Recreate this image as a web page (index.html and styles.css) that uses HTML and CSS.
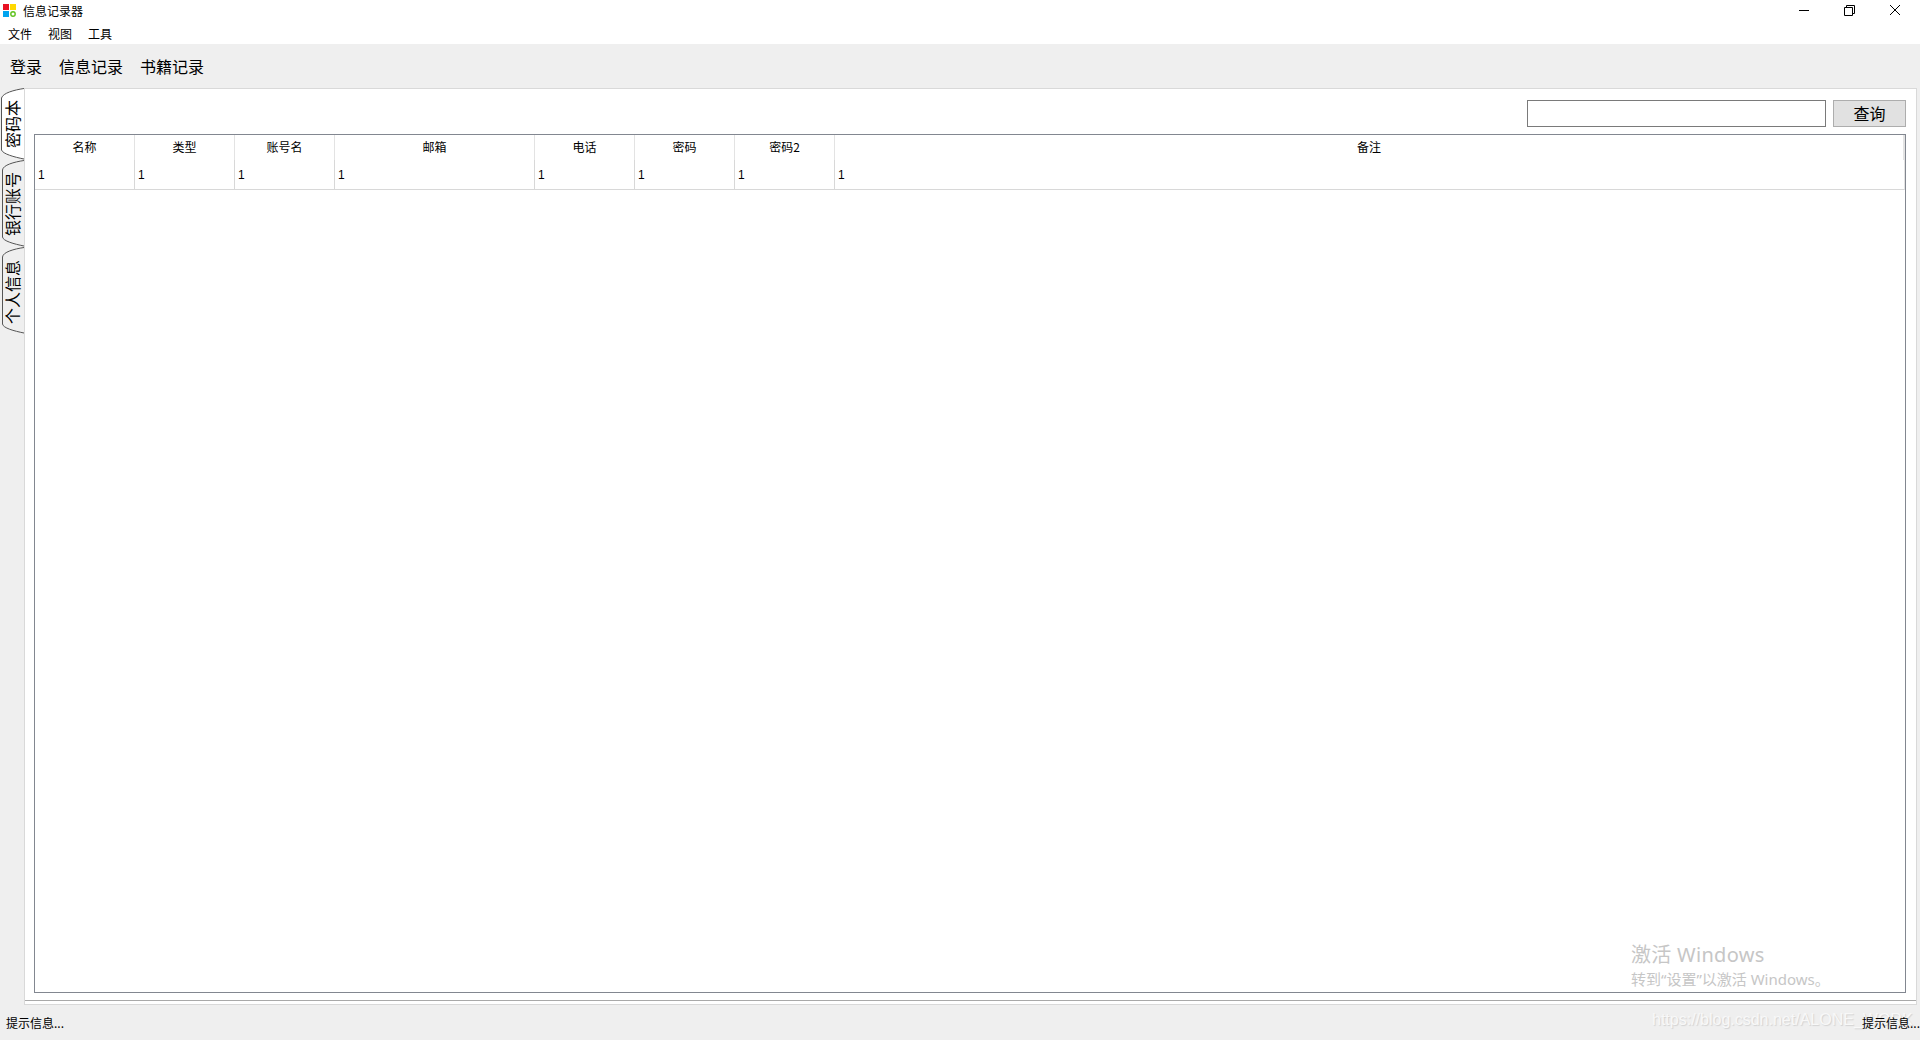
FILE: index.html
```html
<!DOCTYPE html>
<html lang="zh-CN">
<head>
<meta charset="utf-8">
<title>信息记录器</title>
<link rel="stylesheet" href="styles.css">
</head>
<body>
<div class="app">
  <header class="titlebar">
    <div class="title-row">
      <div class="brand">
        <svg class="app-icon" width="14" height="14" viewBox="0 0 14 14">
          <rect x="0" y="0" width="6" height="6" fill="#e81123"/>
          <rect x="7" y="0" width="6" height="6" fill="#ffd800"/>
          <rect x="0" y="7" width="6" height="6" fill="#00a4ef"/>
          <circle cx="10" cy="10" r="2.2" fill="none" stroke="#5fc21e" stroke-width="1.4"/>
        </svg>
        <span>信息记录器</span>
      </div>
      <div class="win-controls">
        <svg class="win-btn" width="46" height="20" viewBox="0 0 46 20"><path d="M19 10.5H29" stroke="#000" fill="none"/></svg>
        <svg class="win-btn" width="46" height="20" viewBox="0 0 46 20"><path d="M18.5 7.5H26.5V15.5H18.5ZM20.5 7.5V5.5H28.5V13.5H26.5" stroke="#000" fill="none"/></svg>
        <svg class="win-btn" width="46" height="20" viewBox="0 0 46 20"><path d="M18 5L28 15M28 5L18 15" stroke="#000" fill="none"/></svg>
      </div>
    </div>
    <nav class="menu">
      <span>文件</span><span>视图</span><span>工具</span>
    </nav>
  </header>

  <div class="toolbar">
    <span>登录</span><span>信息记录</span><span>书籍记录</span>
  </div>

  <main class="workspace">
    <div class="tabs">
      <div class="tab tab-1">
        <svg class="tab-shape" width="24" height="72" viewBox="0 0 24 72"><path d="M24 .5C14 2 3 5 1.5 10V62C3 66 14 69 24 71" fill="#fff" stroke="#555"/></svg>
        <span class="tab-label">密码本</span>
      </div>
      <div class="tab tab-2">
        <svg class="tab-shape" width="24" height="87" viewBox="0 0 24 87"><path d="M24 .5C14 2 3 5 2.5 10V77C3 81 14 84 24 86" fill="none" stroke="#555"/></svg>
        <span class="tab-label">银行账号</span>
      </div>
      <div class="tab tab-3">
        <svg class="tab-shape" width="24" height="87" viewBox="0 0 24 87"><path d="M24 .5C14 2 3 5 2.5 10V77C3 81 14 84 24 86" fill="none" stroke="#555"/></svg>
        <span class="tab-label">个人信息</span>
      </div>
    </div>

    <section class="panel">
      <div class="query">
        <input class="query-input" type="text" aria-label="查询">
        <button class="query-btn" type="button">查询</button>
      </div>
      <div class="grid-frame">
        <div class="grid">
          <div class="th">名称</div><div class="th">类型</div><div class="th">账号名</div><div class="th">邮箱</div><div class="th">电话</div><div class="th">密码</div><div class="th">密码2</div><div class="th">备注</div>
          <div class="td">1</div><div class="td">1</div><div class="td">1</div><div class="td">1</div><div class="td">1</div><div class="td">1</div><div class="td">1</div><div class="td">1</div>
        </div>
      </div>
    </section>
  </main>

  <footer class="statusbar">
    <span>提示信息...</span><span>提示信息...</span>
  </footer>

  <div class="activate">
    <div class="activate-main">激活 Windows</div>
    <div class="activate-sub">转到“设置”以激活 Windows。</div>
  </div>
  <div class="csdn-mark">https://blog.csdn.net/ALONE_WORK</div>
</div>
</body>
</html>
```

FILE: styles.css
```css
* { box-sizing: border-box; }

html, body {
  margin: 0;
  height: 100%;
}

body {
  background: #efefef;
  color: #000;
  font-family: "Noto Sans CJK SC", "Liberation Sans", sans-serif;
  font-size: 12px;
  overflow: hidden;
}

.app {
  position: relative;
  display: flex;
  flex-direction: column;
  width: 1920px;
  height: 1040px;
}

.titlebar {
  height: 44px;
  background: #fff;
  flex: none;
}

.title-row {
  display: flex;
  justify-content: space-between;
  height: 22px;
}

.brand {
  display: flex;
  align-items: center;
  gap: 6px;
  padding-left: 3px;
  line-height: 22px;
}

.app-icon { flex: none; }

.win-controls {
  display: flex;
  padding-right: 2px;
}

.win-btn { display: block; }

.menu {
  display: flex;
  gap: 16px;
  padding: 1px 0 0 8px;
  height: 22px;
  line-height: 22px;
}

.toolbar {
  display: flex;
  flex: none;
  align-items: center;
  gap: 17px;
  height: 44px;
  padding-left: 10px;
  font-size: 16px;
}

.workspace {
  display: flex;
  flex: none;
  height: 917px;
}

.tabs {
  display: flex;
  flex: none;
  flex-direction: column;
  width: 24px;
  position: relative;
  z-index: 1;
}

.tab {
  position: relative;
  display: flex;
  flex: none;
  align-items: center;
  justify-content: center;
  width: 24px;
}

.tab-1 { height: 72px; }
.tab-2 { height: 87px; padding-top: 1px; }
.tab-3 { height: 87px; padding-top: 3px; }

.tab-shape {
  position: absolute;
  top: 0;
  left: 0;
}

.tab-label {
  position: relative;
  writing-mode: vertical-rl;
  text-orientation: sideways;
  transform: rotate(180deg);
  font-size: 16px;
  line-height: 20px;
  margin-left: -1px;
}

.panel {
  display: flex;
  flex-direction: column;
  width: 1893px;
  height: 917px;
  background: #fff;
  border: 1px solid #d9d9d9;
  box-shadow: inset 0 -3px 0 #fff, inset 0 -4px 0 #a9a9a9;
  padding: 11px 10px 11px 9px;
}

.query {
  display: flex;
  flex: none;
  justify-content: flex-end;
  gap: 7px;
  height: 27px;
  margin-bottom: 7px;
}

.query-input {
  width: 299px;
  height: 27px;
  border: 1px solid #7a7a7a;
  background: #fff;
  padding: 0;
  outline: none;
}

.query-btn {
  width: 73px;
  height: 27px;
  border: 1px solid #adadad;
  background: #e1e1e1;
  color: #000;
  padding: 0;
  font: inherit;
  font-size: 16px;
  line-height: 25px;
}

.grid-frame {
  flex: none;
  height: 859px;
  border: 1px solid #828790;
}

.grid {
  display: grid;
  grid-template-columns: 100px 100px 100px 200px 100px 100px 100px 1fr;
  grid-template-rows: 25px 30px;
  border-bottom: 1px solid #d8d8d8;
  height: 55px;
  border-right: 1px solid #e3e3e3;
}

.th {
  text-align: center;
  line-height: 24px;
  border-right: 1px solid #e3e3e3;
}

.th:last-of-type { border-right: none; }

.td {
  padding-left: 3px;
  line-height: 30px;
  font-family: "Liberation Sans", sans-serif;
  border-right: 1px solid #d8d8d8;
}

.td:first-of-type { border-left: 1px solid #eee; }

.td:last-child { border-right: none; }

.statusbar {
  position: relative;
  z-index: 2;
  display: flex;
  flex: 1;
  align-items: center;
  justify-content: space-between;
  padding: 0 0 0 6px;
}

.activate {
  position: absolute;
  left: 1631px;
  top: 941px;
  color: #c6c6c6;
  font-family: "Noto Sans", "Noto Sans CJK SC", sans-serif;
  white-space: nowrap;
}

.activate-main {
  font-size: 20px;
  line-height: 28px;
  letter-spacing: .3px;
}

.activate-sub {
  font-size: 15px;
  line-height: 20px;
}

.csdn-mark {
  position: absolute;
  left: 1652px;
  top: 1009px;
  color: #f8f8f8;
  font-family: "Liberation Sans", sans-serif;
  font-size: 16px;
  line-height: 22px;
  white-space: nowrap;
  text-shadow: 1px 1px 1px #d2d2d2;
}
```
